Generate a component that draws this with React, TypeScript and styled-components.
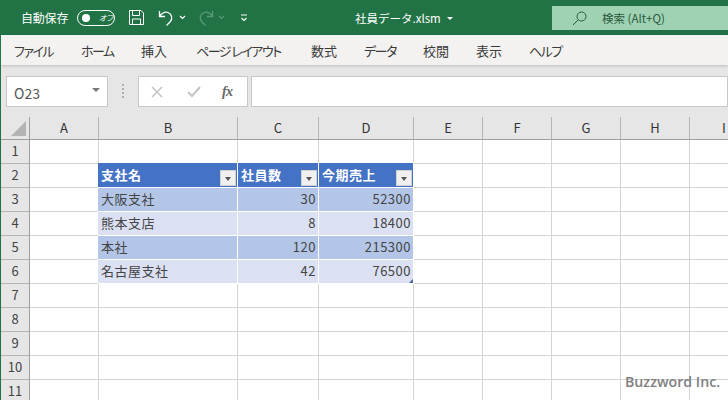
import React from "react";
import styled, { createGlobalStyle } from "styled-components";

const Global = createGlobalStyle`
  html, body { margin: 0; padding: 0; background: #fff; overflow: hidden; }
  * { box-sizing: border-box; }
  body { font-family: "Noto Sans CJK JP", "Liberation Sans", sans-serif; }
`;

const Page = styled.div`
  position: relative;
  width: 728px;
  height: 400px;
  overflow: hidden;
  border-left: 1px solid #217346;
  display: flex;
  flex-direction: column;
`;

const TitleBar = styled.div`
  height: 35px;
  margin-left: -1px;
  background: #217346;
  color: #fff;
  display: flex;
  align-items: center;
  flex: none;
  position: relative;
`;
const AutoSave = styled.span`
  font-size: 12px;
  margin-left: 21px;
  width: 56px;
  letter-spacing: -0.2px;
`;
const Toggle = styled.span`
  width: 38px;
  height: 16px;
  border: 1px solid #fff;
  border-radius: 8px;
  display: flex;
  align-items: center;
  padding-left: 4px;
  font-size: 8px;
  gap: 9px;
  flex: none;
  margin-right: 13px;
  font-style: italic;
  font-feature-settings: "palt";
`;
const Knob = styled.span`
  width: 8px;
  height: 8px;
  border-radius: 50%;
  background: #fff;
`;
const QatIcon = styled.svg<{ $ml?: number }>`
  flex: none;
  margin-left: ${(p) => p.$ml ?? 0}px;
`;
const FileName = styled.div`
  position: absolute;
  left: 355px;
  top: 10px;
  font-size: 11.5px;
  line-height: 16px;
  white-space: nowrap;
  display: flex;
  align-items: center;
  gap: 6px;
`;
const Caret = styled.span`
  width: 0;
  height: 0;
  border-left: 3px solid transparent;
  border-right: 3px solid transparent;
  border-top: 3px solid #fff;
`;
const SearchBox = styled.div`
  position: absolute;
  left: 552px;
  top: 6px;
  width: 176px;
  height: 24px;
  background: #9fd2b3;
  color: #28593d;
  display: flex;
  align-items: center;
  font-size: 11.5px;
  padding-left: 20px;
  gap: 15px;
`;

const TabBar = styled.div`
  height: 30px;
  background: #f3f2f1;
  display: flex;
  align-items: center;
  flex: none;
  padding-left: 13px;
  font-size: 13px;
  color: #3a3a3a;
  box-shadow: 0 1px 3px rgba(0, 0, 0, 0.18);
  position: relative;
  font-feature-settings: "palt";
`;
const Tab = styled.span<{ $w: number; $kana?: boolean }>`
  width: ${(p) => p.$w}px;
  white-space: nowrap;
  flex: none;
  letter-spacing: ${(p) => (p.$kana ? "-1.5px" : "0")};
`;

const FormulaRow = styled.div`
  height: 52px;
  flex: none;
  background: #e6e6e6;
  display: flex;
  align-items: flex-start;
  padding: 11px 0 0 5px;
`;
const FBox = styled.div<{ $w: number }>`
  width: ${(p) => p.$w}px;
  height: 31px;
  background: #fff;
  border: 1px solid #c8c8c8;
  flex: none;
  display: flex;
  align-items: center;
`;
const NameBox = styled(FBox)`
  padding: 0 7px 0 7px;
  justify-content: space-between;
  font-size: 14px;
  color: #555;
`;
const NameValue = styled.span`
  padding-top: 3px;
`;
const NameCaret = styled.span`
  width: 0;
  height: 0;
  border-left: 4px solid transparent;
  border-right: 4px solid transparent;
  border-top: 4px solid #777;
  margin-top: -3px;
`;
const Dots = styled.div`
  width: 30px;
  flex: none;
  height: 30px;
  display: flex;
  flex-direction: column;
  align-items: center;
  justify-content: center;
  gap: 2px;
`;
const Dot = styled.span`
  width: 2px;
  height: 2px;
  background: #b0b0b0;
`;
const FxBox = styled(FBox)`
  padding: 0 12px;
  margin-right: 3px;
  justify-content: flex-start;
`;
const XIcon = styled.svg`
  margin-right: 24px;
  flex: none;
`;
const CheckIcon = styled.svg`
  margin-right: 21px;
  flex: none;
`;
const Fx = styled.span`
  font-family: "Liberation Serif", serif;
  font-style: italic;
  font-weight: 700;
  font-size: 14px;
  color: #666;
  letter-spacing: -0.6px;
`;

const Sheet = styled.div`
  display: grid;
  grid-template-columns: 29px 69px 139px 81px 95px 69px 69px 69px 69px 69px;
  grid-auto-rows: 24px;
  grid-template-rows: 23px;
  flex: none;
`;
const Corner = styled.div`
  background: #e6e6e6;
  border-right: 1px solid #9e9e9e;
  border-bottom: 1px solid #9e9e9e;
  position: relative;
`;
const CornerMark = styled.span`
  position: absolute;
  right: 3px;
  bottom: 3px;
  width: 0;
  height: 0;
  border-left: 15px solid transparent;
  border-bottom: 15px solid #b4b4b4;
`;
const ColHead = styled.div`
  background: #e6e6e6;
  border-right: 1px solid #b4b4b4;
  border-bottom: 1px solid #9e9e9e;
  font-size: 13px;
  color: #333;
  display: flex;
  align-items: center;
  justify-content: center;
  padding-bottom: 1px;
`;
const RowHead = styled.div`
  background: #e6e6e6;
  border-right: 1px solid #9e9e9e;
  border-bottom: 1px solid #b4b4b4;
  font-size: 13px;
  color: #444;
  display: flex;
  align-items: center;
  justify-content: center;
  padding-bottom: 2px;
`;
const Cell = styled.div`
  background: #fff;
  border-right: 1px solid #d4d4d4;
  border-bottom: 1px solid #d4d4d4;
`;
const HeadCell = styled.div<{ $first?: boolean }>`
  background: #4472c4;
  color: #fff;
  font-weight: 700;
  font-size: 13px;
  border-right: 1px solid #fff;
  border-bottom: 1px solid #fff;
  display: flex;
  align-items: center;
  justify-content: space-between;
  margin-top: -1px;
  margin-left: ${(p) => (p.$first ? "-1px" : "0")};
  padding: 0 0 2px 3px;
  letter-spacing: 0.5px;
`;
const FilterButton = styled.span`
  width: 16px;
  height: 16px;
  align-self: flex-end;
  margin: 0 1px -1px 0;
  background: #f0f0f0;
  border: 1px solid #d0d0d0;
  display: flex;
  align-items: center;
  justify-content: center;
  &::after {
    content: "";
    width: 0;
    height: 0;
    margin-top: 1px;
    border-left: 3.5px solid transparent;
    border-right: 3.5px solid transparent;
    border-top: 4px solid #555;
  }
`;
const DataCell = styled.div<{ $band: boolean; $num?: boolean }>`
  background: ${(p) => (p.$band ? "#b3c6e7" : "#dbe1f3")};
  border-right: 1px solid #fff;
  border-bottom: 1px solid #fff;
  color: #444;
  font-size: 13px;
  display: flex;
  align-items: center;
  justify-content: ${(p) => (p.$num ? "flex-end" : "flex-start")};
  margin-left: ${(p) => (p.$num ? "0" : "-1px")};
  padding: 0 ${(p) => (p.$num ? "2px" : "0")} 2px 3px;
  letter-spacing: 0.5px;
  position: relative;
`;
const ResizeHandle = styled.span`
  position: absolute;
  right: 0;
  bottom: 0;
  width: 0;
  height: 0;
  border-left: 4px solid transparent;
  border-bottom: 4px solid #3f5fa8;
`;
const Watermark = styled.div`
  position: absolute;
  left: 624px;
  top: 372px;
  font-family: "Open Sans", "Liberation Sans", sans-serif;
  font-weight: 600;
  font-size: 14.2px;
  color: #808080;
  white-space: nowrap;
`;

const tabs: [string, number, boolean][] = [
  ["ファイル", 67, true], ["ホーム", 60, true], ["挿入", 55, false], ["ページ レイアウト", 115, true],
  ["数式", 53, false], ["データ", 59, true], ["校閲", 53, false], ["表示", 53, false], ["ヘルプ", 60, true],
];
const cols = ["A", "B", "C", "D", "E", "F", "G", "H", "I"];
const data: [string, number, number][] = [
  ["大阪支社", 30, 52300],
  ["熊本支店", 8, 18400],
  ["本社", 120, 215300],
  ["名古屋支社", 42, 76500],
];
const blanks = (key: string, n: number) =>
  Array.from({ length: n }, (_, i) => <Cell key={key + i} />);

export default function App() {
  return (
    <Page>
      <Global />
      <TitleBar>
        <AutoSave>自動保存</AutoSave>
        <Toggle>
          <Knob />
          オフ
        </Toggle>
        <QatIcon width="17" height="17" viewBox="0 0 17 17" fill="none" stroke="#fff" strokeWidth="1">
          <path d="M1.5 1.5h11.5l2.5 2.5v11.5h-14z" />
          <path d="M4.5 1.5v5h7v-5M4.5 15.5v-5.5h8v5.5" />
        </QatIcon>
        <QatIcon $ml={13} width="16" height="18" viewBox="0 0 16 18" fill="none" stroke="#fff" strokeWidth="1.3">
          <path d="M1.5 2v5.5H7M1.5 7.5C4 4 7 2.5 10 3.5c4 1.5 5 6.5 2 9.5l-3.5 3.5" />
        </QatIcon>
        <QatIcon $ml={5} width="7" height="5" viewBox="0 0 7 5" fill="none" stroke="#fff" strokeWidth="1.1">
          <path d="M1 1l2.5 2.5L6 1" />
        </QatIcon>
        <QatIcon $ml={12} width="16" height="18" viewBox="0 0 16 18" fill="none" stroke="#5a9a78" strokeWidth="1.3">
          <path d="M14.5 2v5.5H9M14.5 7.5C12 4 9 2.5 6 3.5c-4 1.5-5 6.5-2 9.5l3.5 3.5" />
        </QatIcon>
        <QatIcon $ml={4} width="7" height="5" viewBox="0 0 7 5" fill="none" stroke="#5a9a78" strokeWidth="1.1">
          <path d="M1 1l2.5 2.5L6 1" />
        </QatIcon>
        <QatIcon $ml={15} width="8" height="8" viewBox="0 0 8 8" fill="none" stroke="#fff" strokeWidth="1.1">
          <path d="M1 1h6M1.5 4L4 6.5 6.5 4" />
        </QatIcon>
        <FileName>
          社員データ.xlsm
          <Caret />
        </FileName>
        <SearchBox>
          <svg width="15" height="15" viewBox="0 0 15 15" fill="none" stroke="#28593d" strokeWidth="1">
            <circle cx="9.5" cy="5.5" r="4.5" />
            <path d="M6 9L1 14" />
          </svg>
          検索 (Alt+Q)
        </SearchBox>
      </TitleBar>
      <TabBar>
        {tabs.map(([t, w, k]) => (
          <Tab key={t} $w={w} $kana={k}>{t}</Tab>
        ))}
      </TabBar>
      <FormulaRow>
        <NameBox $w={102}>
          <NameValue>O23</NameValue>
          <NameCaret />
        </NameBox>
        <Dots>
          <Dot />
          <Dot />
          <Dot />
          <Dot />
        </Dots>
        <FxBox $w={110}>
          <XIcon width="12" height="12" viewBox="0 0 12 12" stroke="#c4c4c4" strokeWidth="1.5" fill="none">
            <path d="M1 1l10 10M11 1L1 11" />
          </XIcon>
          <CheckIcon width="14" height="12" viewBox="0 0 14 12" stroke="#c4c4c4" strokeWidth="2" fill="none">
            <path d="M1 6l4 4 8-9" />
          </CheckIcon>
          <Fx>fx</Fx>
        </FxBox>
        <FBox $w={477} />
      </FormulaRow>
      <Sheet>
        <Corner>
          <CornerMark />
        </Corner>
        {cols.map((c) => (
          <ColHead key={c}>{c}</ColHead>
        ))}
        <RowHead>1</RowHead>
        {blanks("r1", 9)}
        <RowHead>2</RowHead>
        <Cell />
        <HeadCell $first>支社名<FilterButton /></HeadCell>
        <HeadCell>社員数<FilterButton /></HeadCell>
        <HeadCell>今期売上<FilterButton /></HeadCell>
        {blanks("r2", 5)}
        {data.map(([name, n, s], i) => (
          <React.Fragment key={name}>
            <RowHead>{i + 3}</RowHead>
            <Cell />
            <DataCell $band={i % 2 === 0}>{name}</DataCell>
            <DataCell $band={i % 2 === 0} $num>{n}</DataCell>
            <DataCell $band={i % 2 === 0} $num>
              {s}
              {i === 3 && <ResizeHandle />}
            </DataCell>
            {blanks("d" + i, 5)}
          </React.Fragment>
        ))}
        {[7, 8, 9, 10, 11].map((r) => (
          <React.Fragment key={r}>
            <RowHead>{r}</RowHead>
            {blanks("b" + r, 9)}
          </React.Fragment>
        ))}
      </Sheet>
      <Watermark>Buzzword Inc.</Watermark>
    </Page>
  );
}
